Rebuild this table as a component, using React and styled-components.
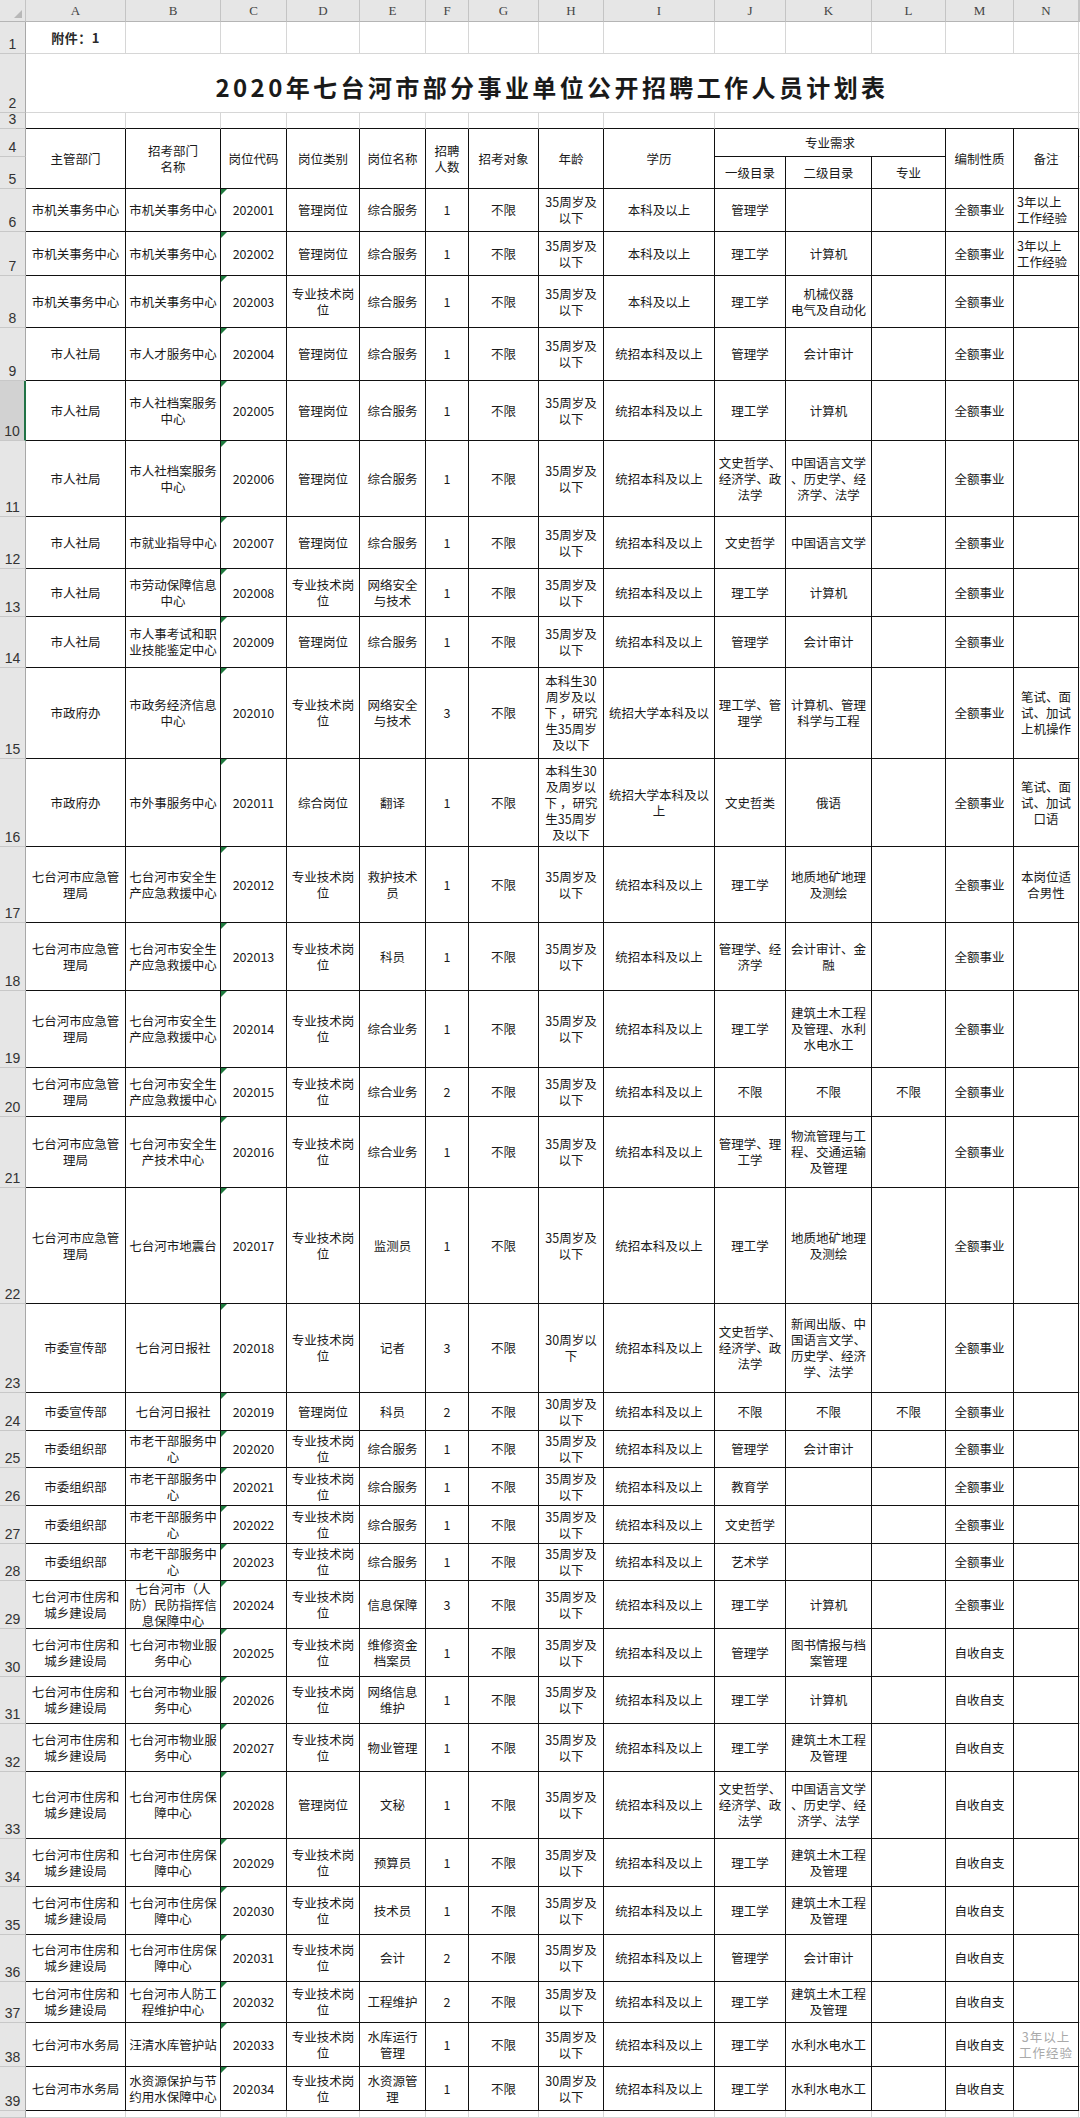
import React from 'react';
import styled, { createGlobalStyle, css } from 'styled-components';

const GlobalStyle = createGlobalStyle`
  html, body { margin: 0; padding: 0; background: #ffffff; }
  body { font-family: "Noto Sans CJK SC", "Noto Sans", sans-serif; }
`;

const COLS = [26, 100, 95, 66, 73, 66, 43, 70, 65, 111, 71, 86, 74, 68, 65, 1];
const LETTERS = ['A', 'B', 'C', 'D', 'E', 'F', 'G', 'H', 'I', 'J', 'K', 'L', 'M', 'N', ''];

const AGE = '35周岁及\n以下';
const EDU = '统招本科及以上';
const QE = '全额事业';
const ZS = '自收自支';
const ZJ = '专业技术岗\n位';
const A_EM = '七台河市应急管\n理局';
const A_ZF = '七台河市住房和\n城乡建设局';
const B_AJ = '七台河市安全生\n产应急救援中心';
const B_LG = '市老干部服务中\n心';
const B_ZB = '七台河市住房保\n障中心';
const B_WY = '七台河市物业服\n务中心';
const K_ZY = '中国语言文学\n、历史学、经\n济学、法学';
const J_WS = '文史哲学、\n经济学、政\n法学';
const K_JZ = '建筑土木工程\n及管理';

const left = (t) => ({ t, left: true });
const ghost = (t) => ({ t, ghost: true });
const R = (h, ...cells) => ({ h, cells });

const BODY = [
  R(43, '市机关事务中心', '市机关事务中心', '202001', '管理岗位', '综合服务', '1', '不限', AGE, '本科及以上', '管理学', '', '', QE, left('3年以上\n工作经验')),
  R(44, '市机关事务中心', '市机关事务中心', '202002', '管理岗位', '综合服务', '1', '不限', AGE, '本科及以上', '理工学', '计算机', '', QE, left('3年以上\n工作经验')),
  R(52, '市机关事务中心', '市机关事务中心', '202003', ZJ, '综合服务', '1', '不限', AGE, '本科及以上', '理工学', '机械仪器\n电气及自动化', '', QE, ''),
  R(53, '市人社局', '市人才服务中心', '202004', '管理岗位', '综合服务', '1', '不限', AGE, EDU, '管理学', '会计审计', '', QE, ''),
  R(60, '市人社局', '市人社档案服务\n中心', '202005', '管理岗位', '综合服务', '1', '不限', AGE, EDU, '理工学', '计算机', '', QE, ''),
  R(76, '市人社局', '市人社档案服务\n中心', '202006', '管理岗位', '综合服务', '1', '不限', AGE, EDU, J_WS, K_ZY, '', QE, ''),
  R(52, '市人社局', '市就业指导中心', '202007', '管理岗位', '综合服务', '1', '不限', AGE, EDU, '文史哲学', '中国语言文学', '', QE, ''),
  R(48, '市人社局', '市劳动保障信息\n中心', '202008', ZJ, '网络安全\n与技术', '1', '不限', AGE, EDU, '理工学', '计算机', '', QE, ''),
  R(51, '市人社局', '市人事考试和职\n业技能鉴定中心', '202009', '管理岗位', '综合服务', '1', '不限', AGE, EDU, '管理学', '会计审计', '', QE, ''),
  R(91, '市政府办', '市政务经济信息\n中心', '202010', ZJ, '网络安全\n与技术', '3', '不限', '本科生30\n周岁及以\n下 ，研究\n生35周岁\n及以下', '统招大学本科及以', '理工学、管\n理学', '计算机、管理\n科学与工程', '', QE, '笔试、面\n试、加试\n上机操作'),
  R(88, '市政府办', '市外事服务中心', '202011', '综合岗位', '翻译', '1', '不限', '本科生30\n及周岁以\n下 ，研究\n生35周岁\n及以下', '统招大学本科及以\n上', '文史哲类', '俄语', '', QE, '笔试、面\n试、加试\n口语'),
  R(76, A_EM, B_AJ, '202012', ZJ, '救护技术\n员', '1', '不限', AGE, EDU, '理工学', '地质地矿地理\n及测绘', '', QE, '本岗位适\n合男性'),
  R(68, A_EM, B_AJ, '202013', ZJ, '科员', '1', '不限', AGE, EDU, '管理学、经\n济学', '会计审计、金\n融', '', QE, ''),
  R(77, A_EM, B_AJ, '202014', ZJ, '综合业务', '1', '不限', AGE, EDU, '理工学', '建筑土木工程\n及管理、水利\n水电水工', '', QE, ''),
  R(49, A_EM, B_AJ, '202015', ZJ, '综合业务', '2', '不限', AGE, EDU, '不限', '不限', '不限', QE, ''),
  R(71, A_EM, '七台河市安全生\n产技术中心', '202016', ZJ, '综合业务', '1', '不限', AGE, EDU, '管理学、理\n工学', '物流管理与工\n程、交通运输\n及管理', '', QE, ''),
  R(116, A_EM, '七台河市地震台', '202017', ZJ, '监测员', '1', '不限', AGE, EDU, '理工学', '地质地矿地理\n及测绘', '', QE, ''),
  R(89, '市委宣传部', '七台河日报社', '202018', ZJ, '记者', '3', '不限', '30周岁以\n下', EDU, J_WS, '新闻出版、中\n国语言文学、\n历史学、经济\n学、法学', '', QE, ''),
  R(38, '市委宣传部', '七台河日报社', '202019', '管理岗位', '科员', '2', '不限', '30周岁及\n以下', EDU, '不限', '不限', '不限', QE, ''),
  R(37, '市委组织部', B_LG, '202020', ZJ, '综合服务', '1', '不限', AGE, EDU, '管理学', '会计审计', '', QE, ''),
  R(38, '市委组织部', B_LG, '202021', ZJ, '综合服务', '1', '不限', AGE, EDU, '教育学', '', '', QE, ''),
  R(38, '市委组织部', B_LG, '202022', ZJ, '综合服务', '1', '不限', AGE, EDU, '文史哲学', '', '', QE, ''),
  R(37, '市委组织部', B_LG, '202023', ZJ, '综合服务', '1', '不限', AGE, EDU, '艺术学', '', '', QE, ''),
  R(48, A_ZF, '七台河市（人\n防）民防指挥信\n息保障中心', '202024', ZJ, '信息保障', '3', '不限', AGE, EDU, '理工学', '计算机', '', QE, ''),
  R(48, A_ZF, B_WY, '202025', ZJ, '维修资金\n档案员', '1', '不限', AGE, EDU, '管理学', '图书情报与档\n案管理', '', ZS, ''),
  R(47, A_ZF, B_WY, '202026', ZJ, '网络信息\n维护', '1', '不限', AGE, EDU, '理工学', '计算机', '', ZS, ''),
  R(48, A_ZF, B_WY, '202027', ZJ, '物业管理', '1', '不限', AGE, EDU, '理工学', K_JZ, '', ZS, ''),
  R(67, A_ZF, B_ZB, '202028', '管理岗位', '文秘', '1', '不限', AGE, EDU, J_WS, K_ZY, '', ZS, ''),
  R(48, A_ZF, B_ZB, '202029', ZJ, '预算员', '1', '不限', AGE, EDU, '理工学', K_JZ, '', ZS, ''),
  R(48, A_ZF, B_ZB, '202030', ZJ, '技术员', '1', '不限', AGE, EDU, '理工学', K_JZ, '', ZS, ''),
  R(47, A_ZF, B_ZB, '202031', ZJ, '会计', '2', '不限', AGE, EDU, '管理学', '会计审计', '', ZS, ''),
  R(41, A_ZF, '七台河市人防工\n程维护中心', '202032', ZJ, '工程维护', '2', '不限', AGE, EDU, '理工学', K_JZ, '', ZS, ''),
  R(44, '七台河市水务局', '汪清水库管护站', '202033', ZJ, '水库运行\n管理', '1', '不限', AGE, EDU, '理工学', '水利水电水工', '', ZS, ghost('3年以上\n工作经验')),
  R(44, '七台河市水务局', '水资源保护与节\n约用水保障中心', '202034', ZJ, '水资源管\n理', '1', '不限', '30周岁及\n以下', EDU, '理工学', '水利水电水工', '', ZS, ''),
];

const ROW_HEIGHTS = [22, 32, 59, 16, 28, 32, ...BODY.map((r) => r.h), 7];

const Sheet = styled.div`
  display: grid;
  grid-template-columns: ${COLS.map((w) => `${w}px`).join(' ')};
  grid-template-rows: ${ROW_HEIGHTS.map((h) => `${h}px`).join(' ')};
  width: 1080px;
  overflow: hidden;
  background: #ffffff;
  color: #1a1a1a;
  font-family: "Noto Sans CJK SC", "Noto Sans", sans-serif;
`;

const Corner = styled.div`
  box-sizing: border-box;
  position: relative;
  background: #e6e6e6;
  border-right: 1px solid #c4c4c4;
  border-bottom: 1px solid #b5b5b5;
  &::after {
    content: '';
    position: absolute;
    right: 3px;
    bottom: 3px;
    border-bottom: 8px solid #b8b8b8;
    border-left: 8px solid transparent;
  }
`;

const ColHead = styled.div`
  box-sizing: border-box;
  background: #e6e6e6;
  border-right: 1px solid #c4c4c4;
  border-bottom: 1px solid #b5b5b5;
  display: flex;
  align-items: center;
  justify-content: center;
  font-family: "Liberation Serif", serif;
  font-size: 13px;
  color: #444444;
`;

const RowHead = styled.div`
  box-sizing: border-box;
  background: ${(p) => (p.$active ? '#d2d2d2' : '#e6e6e6')};
  border-bottom: 1px solid #c8c8c8;
  border-right: ${(p) => (p.$active ? '2px solid #217346' : '1px solid #a8a8a8')};
  display: flex;
  align-items: flex-end;
  justify-content: center;
  padding-bottom: 1px;
  font-family: "Liberation Sans", sans-serif;
  font-size: 14px;
  line-height: 15px;
  color: #333333;
`;

const PlainCell = styled.div`
  box-sizing: border-box;
  border-right: ${(p) => (p.$noRight ? 'none' : '1px solid #d6d6d6')};
  border-bottom: 1px solid ${(p) => (p.$dark ? '#111111' : '#d6d6d6')};
  grid-column: ${(p) => (p.$span ? `span ${p.$span}` : 'auto')};
`;

const NoteCell = styled(PlainCell)`
  display: flex;
  align-items: center;
  justify-content: center;
  font-size: 13px;
  font-weight: 700;
  letter-spacing: 0.5px;
  color: #2a2a2a;
`;

const TitleCell = styled.div`
  box-sizing: border-box;
  grid-column: span 14;
  border-bottom: 1px solid #d6d6d6;
  border-right: 1px solid #d6d6d6;
  display: flex;
  align-items: center;
  justify-content: center;
  padding-top: 6px;
  font-size: 24px;
  font-weight: 700;
  letter-spacing: 3.4px;
  color: #1a1a1a;
  white-space: nowrap;
`;

const cellText = css`
  box-sizing: border-box;
  display: flex;
  align-items: center;
  white-space: pre;
  font-size: 12.5px;
  line-height: 16px;
  border-right: 1px solid #111111;
  border-bottom: 1px solid #111111;
  position: relative;
`;

const HeadCell = styled.div`
  ${cellText}
  justify-content: center;
  text-align: center;
  color: #1a1a1a;
  grid-row: ${(p) => (p.$rows ? `span ${p.$rows}` : 'auto')};
  grid-column: ${(p) => (p.$cols ? `span ${p.$cols}` : 'auto')};
`;

const DataCell = styled.div`
  ${cellText}
  justify-content: ${(p) => (p.$left ? 'flex-start' : 'center')};
  text-align: ${(p) => (p.$left ? 'left' : 'center')};
  padding-left: ${(p) => (p.$left ? '3px' : '0')};
  color: ${(p) => (p.$ghost ? '#a9a9a9' : '#1a1a1a')};
  letter-spacing: ${(p) => (p.$ghost ? '1px' : '0')};
  ${(p) =>
    p.$flag &&
    css`
      &::before {
        content: '';
        position: absolute;
        left: 0;
        top: 0;
        border-top: 6px solid #1e7b3e;
        border-right: 6px solid transparent;
      }
    `}
`;

function BodyRow({ num, row }) {
  return (
    <>
      <RowHead $active={num === 10}>{num}</RowHead>
      {row.cells.map((c, i) => {
        const isObj = c && typeof c === 'object';
        const text = isObj ? c.t : c;
        return (
          <DataCell
            key={i}
            $left={isObj && c.left}
            $ghost={isObj && c.ghost}
            $flag={i === 2}
          >
            {text}
          </DataCell>
        );
      })}
      <PlainCell $noRight />
    </>
  );
}

export default function App() {
  return (
    <>
      <GlobalStyle />
      <Sheet>
        <Corner />
        {LETTERS.map((l, i) => (
          <ColHead key={i}>{l}</ColHead>
        ))}

        <RowHead>1</RowHead>
        <NoteCell>附件：1</NoteCell>
        {LETTERS.slice(1, 14).map((l) => (
          <PlainCell key={l} />
        ))}
        <PlainCell $noRight />

        <RowHead>2</RowHead>
        <TitleCell>2020年七台河市部分事业单位公开招聘工作人员计划表</TitleCell>
        <PlainCell $noRight />

        <RowHead>3</RowHead>
        {LETTERS.slice(0, 9).map((l) => (
          <PlainCell key={l} $dark />
        ))}
        <PlainCell $dark $span={5} />
        <PlainCell $noRight />

        <RowHead>4</RowHead>
        <HeadCell $rows={2}>主管部门</HeadCell>
        <HeadCell $rows={2}>{'招考部门\n名称'}</HeadCell>
        <HeadCell $rows={2}>岗位代码</HeadCell>
        <HeadCell $rows={2}>岗位类别</HeadCell>
        <HeadCell $rows={2}>岗位名称</HeadCell>
        <HeadCell $rows={2}>{'招聘\n人数'}</HeadCell>
        <HeadCell $rows={2}>招考对象</HeadCell>
        <HeadCell $rows={2}>年龄</HeadCell>
        <HeadCell $rows={2}>学历</HeadCell>
        <HeadCell $cols={3}>专业需求</HeadCell>
        <HeadCell $rows={2}>编制性质</HeadCell>
        <HeadCell $rows={2}>备注</HeadCell>
        <PlainCell $noRight />

        <RowHead>5</RowHead>
        <HeadCell>一级目录</HeadCell>
        <HeadCell>二级目录</HeadCell>
        <HeadCell>专业</HeadCell>
        <PlainCell $noRight />

        {BODY.map((row, i) => (
          <BodyRow key={i} num={i + 6} row={row} />
        ))}

        <RowHead />
        {LETTERS.map((l, i) => (
          <PlainCell key={i} $noRight={i === 14} />
        ))}
      </Sheet>
    </>
  );
}
